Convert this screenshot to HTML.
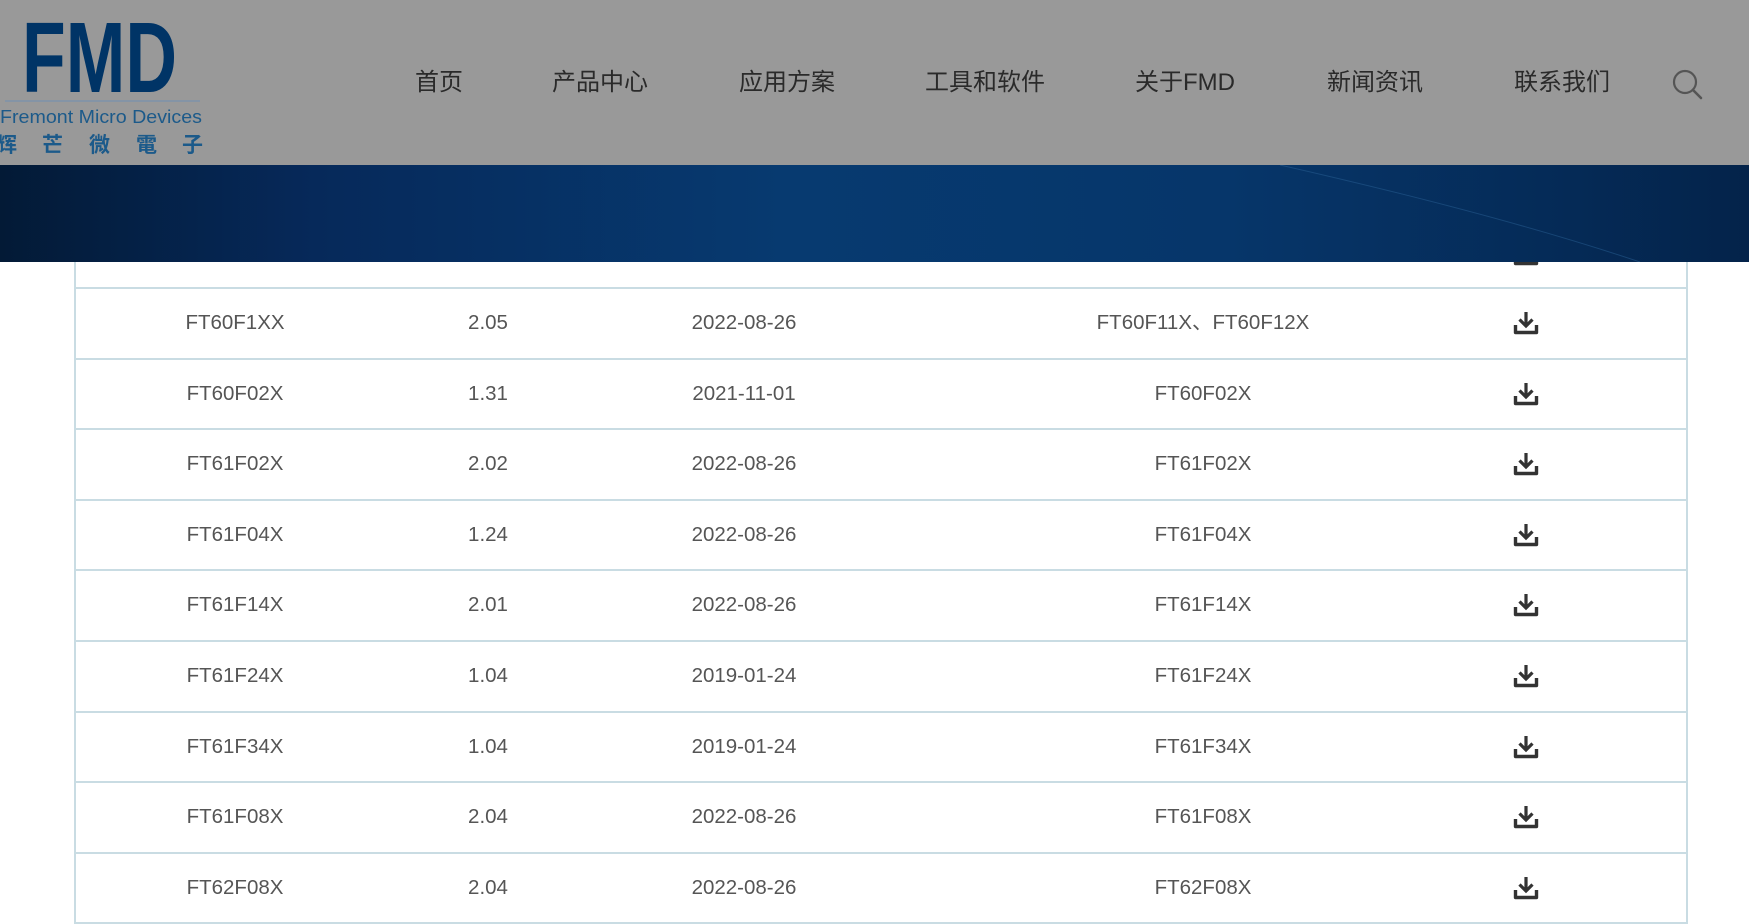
<!DOCTYPE html>
<html><head><meta charset="utf-8">
<style>
html,body{margin:0;padding:0;width:1749px;height:924px;overflow:hidden;background:#fff;font-family:"Liberation Sans","Noto Sans CJK SC",sans-serif}
.header{position:absolute;left:0;top:0;width:1749px;height:165px;background:#999;z-index:3}
.banner{position:absolute;left:0;top:165px;width:1749px;height:97px;background:linear-gradient(90deg,#031a36 0%,#06295a 18%,#073a70 45%,#06366a 70%,#052a56 90%,#04234a 100%);overflow:hidden;z-index:3}
.nav{position:absolute;top:68px;font-size:24px;color:#2a2a2a;line-height:30px;white-space:nowrap}
.tbl{position:absolute;left:74px;top:262px;width:1610px;height:662px;border-left:2px solid #c9dce3;border-right:2px solid #c9dce3}
.line{position:absolute;left:74px;width:1614px;height:2px;background:#c9dce3}
.r{position:absolute;left:0;width:1749px;height:70px}
.c{position:absolute;top:24px;font-size:20.5px;color:#555;transform:translateX(-50%);white-space:nowrap;line-height:24px}
.c1{left:235px}.c2{left:488px}.c3{left:744px}.c4{left:1203px}
.ic{position:absolute;left:1513px;top:24px;width:26px;height:24px}
</style></head><body>
<div class="header">
<svg width="230" height="165" style="position:absolute;left:0;top:0">
<text x="22" y="92" font-family="Liberation Sans" font-weight="bold" font-size="100" fill="#003466" textLength="155" lengthAdjust="spacingAndGlyphs">FMD</text>
<line x1="5" y1="101" x2="200" y2="101" stroke="#7d93aa" stroke-width="1.5"/>
<text x="0" y="123" font-family="Liberation Sans" font-size="18" fill="#1c5a8a" textLength="202" lengthAdjust="spacingAndGlyphs">Fremont Micro Devices</text>
<text x="-4" y="152" font-family="Noto Sans CJK SC" font-weight="bold" font-size="21" fill="#1c5a8a">辉</text>
<text x="42" y="152" font-family="Noto Sans CJK SC" font-weight="bold" font-size="21" fill="#1c5a8a">芒</text>
<text x="89" y="152" font-family="Noto Sans CJK SC" font-weight="bold" font-size="21" fill="#1c5a8a">微</text>
<text x="136" y="152" font-family="Noto Sans CJK TC" font-weight="bold" font-size="21" fill="#1c5a8a">電</text>
<text x="182" y="152" font-family="Noto Sans CJK SC" font-weight="bold" font-size="21" fill="#1c5a8a">子</text>
</svg>
<div class="nav" style="left:415px">首页</div>
<div class="nav" style="left:552px">产品中心</div>
<div class="nav" style="left:739px">应用方案</div>
<div class="nav" style="left:925px">工具和软件</div>
<div class="nav" style="left:1135px">关于FMD</div>
<div class="nav" style="left:1327px">新闻资讯</div>
<div class="nav" style="left:1514px">联系我们</div>
<svg width="34" height="34" style="position:absolute;left:1671px;top:68px"><circle cx="14" cy="14" r="11" fill="none" stroke="#555" stroke-width="2.2"/><line x1="22" y1="22" x2="30" y2="30" stroke="#555" stroke-width="2.6" stroke-linecap="round"/></svg>
</div>
<div class="banner">
<svg width="1749" height="97" style="position:absolute;left:0;top:0"><path d="M1280 0 Q1500 50 1640 97" stroke="#2a5f93" stroke-width="1" fill="none" opacity="0.5"/></svg>
</div>
<div class="tbl"></div>
<svg class="ic" style="top:242px" viewBox="0 0 26 24"><path d="M13 1v12" stroke="#333" stroke-width="3.2"/><path d="M6.5 8.5L13 15l6.5-6.5" stroke="#333" stroke-width="3.2" fill="none"/><path d="M2.5 14v7.5h21V14" stroke="#333" stroke-width="3.4" fill="none" stroke-linejoin="round"/></svg>

<div class="line" style="top:287px"></div>
<div class="line" style="top:358px"></div>
<div class="line" style="top:428px"></div>
<div class="line" style="top:499px"></div>
<div class="line" style="top:569px"></div>
<div class="line" style="top:640px"></div>
<div class="line" style="top:711px"></div>
<div class="line" style="top:781px"></div>
<div class="line" style="top:852px"></div>
<div class="line" style="top:922px"></div>

<div class="r" style="top:287px"><div class="c c1">FT60F1XX</div><div class="c c2">2.05</div><div class="c c3">2022-08-26</div><div class="c c4">FT60F11X、FT60F12X</div><svg class="ic" viewBox="0 0 26 24"><path d="M13 1v12" stroke="#333" stroke-width="3.2"/><path d="M6.5 8.5L13 15l6.5-6.5" stroke="#333" stroke-width="3.2" fill="none"/><path d="M2.5 14v7.5h21V14" stroke="#333" stroke-width="3.4" fill="none" stroke-linejoin="round"/></svg></div>
<div class="r" style="top:358px"><div class="c c1">FT60F02X</div><div class="c c2">1.31</div><div class="c c3">2021-11-01</div><div class="c c4">FT60F02X</div><svg class="ic" viewBox="0 0 26 24"><path d="M13 1v12" stroke="#333" stroke-width="3.2"/><path d="M6.5 8.5L13 15l6.5-6.5" stroke="#333" stroke-width="3.2" fill="none"/><path d="M2.5 14v7.5h21V14" stroke="#333" stroke-width="3.4" fill="none" stroke-linejoin="round"/></svg></div>
<div class="r" style="top:428px"><div class="c c1">FT61F02X</div><div class="c c2">2.02</div><div class="c c3">2022-08-26</div><div class="c c4">FT61F02X</div><svg class="ic" viewBox="0 0 26 24"><path d="M13 1v12" stroke="#333" stroke-width="3.2"/><path d="M6.5 8.5L13 15l6.5-6.5" stroke="#333" stroke-width="3.2" fill="none"/><path d="M2.5 14v7.5h21V14" stroke="#333" stroke-width="3.4" fill="none" stroke-linejoin="round"/></svg></div>
<div class="r" style="top:499px"><div class="c c1">FT61F04X</div><div class="c c2">1.24</div><div class="c c3">2022-08-26</div><div class="c c4">FT61F04X</div><svg class="ic" viewBox="0 0 26 24"><path d="M13 1v12" stroke="#333" stroke-width="3.2"/><path d="M6.5 8.5L13 15l6.5-6.5" stroke="#333" stroke-width="3.2" fill="none"/><path d="M2.5 14v7.5h21V14" stroke="#333" stroke-width="3.4" fill="none" stroke-linejoin="round"/></svg></div>
<div class="r" style="top:569px"><div class="c c1">FT61F14X</div><div class="c c2">2.01</div><div class="c c3">2022-08-26</div><div class="c c4">FT61F14X</div><svg class="ic" viewBox="0 0 26 24"><path d="M13 1v12" stroke="#333" stroke-width="3.2"/><path d="M6.5 8.5L13 15l6.5-6.5" stroke="#333" stroke-width="3.2" fill="none"/><path d="M2.5 14v7.5h21V14" stroke="#333" stroke-width="3.4" fill="none" stroke-linejoin="round"/></svg></div>
<div class="r" style="top:640px"><div class="c c1">FT61F24X</div><div class="c c2">1.04</div><div class="c c3">2019-01-24</div><div class="c c4">FT61F24X</div><svg class="ic" viewBox="0 0 26 24"><path d="M13 1v12" stroke="#333" stroke-width="3.2"/><path d="M6.5 8.5L13 15l6.5-6.5" stroke="#333" stroke-width="3.2" fill="none"/><path d="M2.5 14v7.5h21V14" stroke="#333" stroke-width="3.4" fill="none" stroke-linejoin="round"/></svg></div>
<div class="r" style="top:711px"><div class="c c1">FT61F34X</div><div class="c c2">1.04</div><div class="c c3">2019-01-24</div><div class="c c4">FT61F34X</div><svg class="ic" viewBox="0 0 26 24"><path d="M13 1v12" stroke="#333" stroke-width="3.2"/><path d="M6.5 8.5L13 15l6.5-6.5" stroke="#333" stroke-width="3.2" fill="none"/><path d="M2.5 14v7.5h21V14" stroke="#333" stroke-width="3.4" fill="none" stroke-linejoin="round"/></svg></div>
<div class="r" style="top:781px"><div class="c c1">FT61F08X</div><div class="c c2">2.04</div><div class="c c3">2022-08-26</div><div class="c c4">FT61F08X</div><svg class="ic" viewBox="0 0 26 24"><path d="M13 1v12" stroke="#333" stroke-width="3.2"/><path d="M6.5 8.5L13 15l6.5-6.5" stroke="#333" stroke-width="3.2" fill="none"/><path d="M2.5 14v7.5h21V14" stroke="#333" stroke-width="3.4" fill="none" stroke-linejoin="round"/></svg></div>
<div class="r" style="top:852px"><div class="c c1">FT62F08X</div><div class="c c2">2.04</div><div class="c c3">2022-08-26</div><div class="c c4">FT62F08X</div><svg class="ic" viewBox="0 0 26 24"><path d="M13 1v12" stroke="#333" stroke-width="3.2"/><path d="M6.5 8.5L13 15l6.5-6.5" stroke="#333" stroke-width="3.2" fill="none"/><path d="M2.5 14v7.5h21V14" stroke="#333" stroke-width="3.4" fill="none" stroke-linejoin="round"/></svg></div>
</body></html>
